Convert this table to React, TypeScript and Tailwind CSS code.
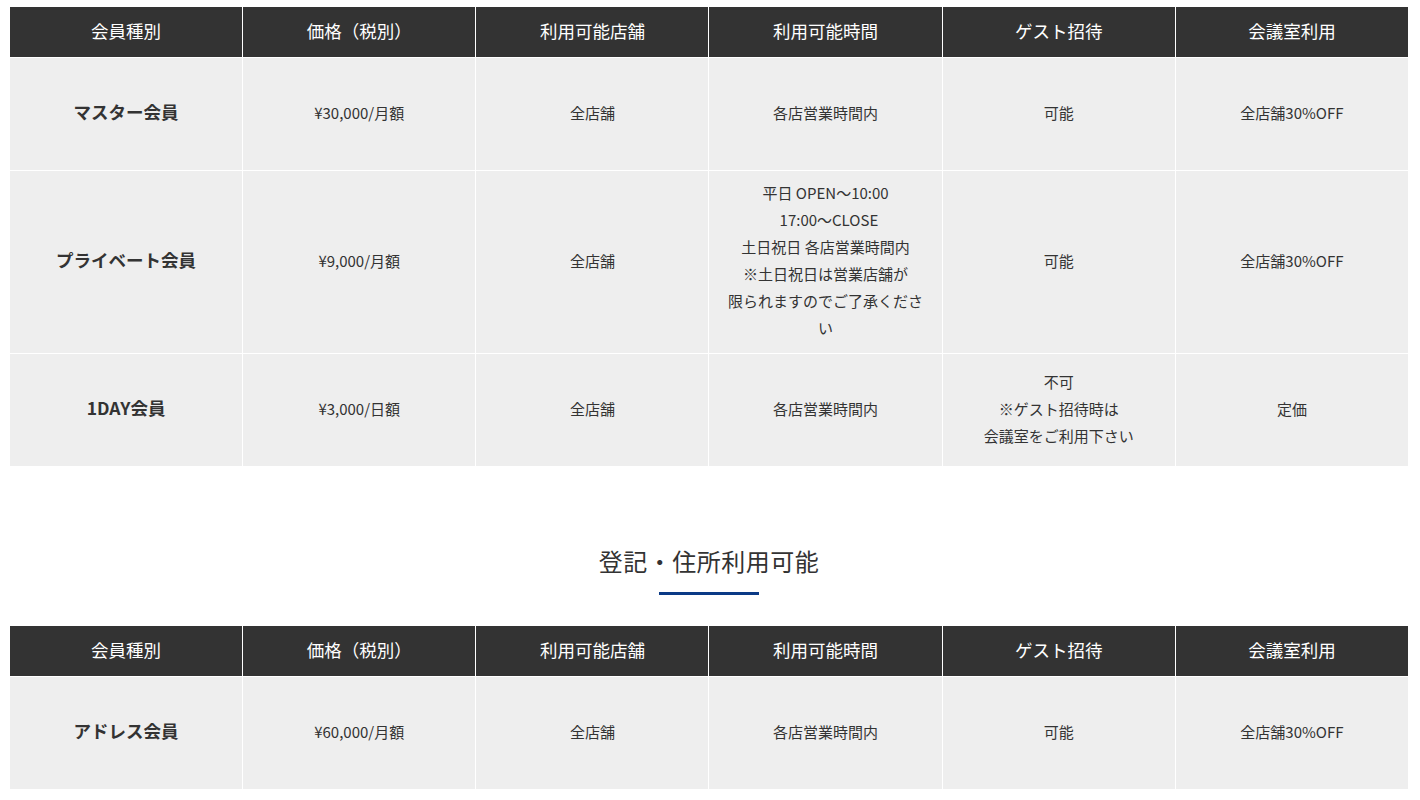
import React from 'react'

const headers = ['会員種別', '価格（税別）', '利用可能店舗', '利用可能時間', 'ゲスト招待', '会議室利用']

type Row = { name: string; cells: string[][] }

const plans: Row[] = [
    {
        name: 'マスター会員',
        cells: [['¥30,000/月額'], ['全店舗'], ['各店営業時間内'], ['可能'], ['全店舗30%OFF']],
    },
    {
        name: 'プライベート会員',
        cells: [
            ['¥9,000/月額'],
            ['全店舗'],
            ['平日 OPEN～10:00', '\u00a0\u00a017:00～CLOSE', '土日祝日 各店営業時間内', '※土日祝日は営業店舗が', '限られますのでご了承くださ', 'い'],
            ['可能'],
            ['全店舗30%OFF'],
        ],
    },
    {
        name: '1DAY会員',
        cells: [['¥3,000/日額'], ['全店舗'], ['各店営業時間内'], ['不可', '※ゲスト招待時は', '会議室をご利用下さい'], ['定価']],
    },
]

const addressPlans: Row[] = [
    {
        name: 'アドレス会員',
        cells: [['¥60,000/月額'], ['全店舗'], ['各店営業時間内'], ['可能'], ['全店舗30%OFF']],
    },
]

function PlanTable({ rows }: { rows: Row[] }) {
    return (
        <table className="w-full table-fixed border-collapse">
            <thead>
                <tr>
                    {headers.map((h) => (
                        <th
                            key={h}
                            className="h-[51px] border border-white bg-[#333333] px-2 pb-[3px] text-[17.5px] font-normal leading-[27px] text-white"
                        >
                            {h}
                        </th>
                    ))}
                </tr>
            </thead>
            <tbody>
                {rows.map((row) => (
                    <tr key={row.name} className="h-[113px]">
                        <td className="border border-white bg-[#eeeeee] px-2 pt-[8px] pb-[12px] text-center text-[17.5px] font-bold text-[#333333]">
                            {row.name}
                        </td>
                        {row.cells.map((lines, i) => (
                            <td
                                key={i}
                                className="border border-white bg-[#eeeeee] px-2 pt-[8px] pb-[12px] text-center text-[15px] leading-[27px] text-[#333333]"
                            >
                                {lines.map((l, j) => (
                                    <div key={j} className="whitespace-nowrap">{l}</div>
                                ))}
                            </td>
                        ))}
                    </tr>
                ))}
            </tbody>
        </table>
    )
}

export default function App() {
    return (
        <div
            className="min-h-[800px] bg-white px-[9px] pt-[6px]"
            style={{ fontFamily: '"Noto Sans CJK JP", "Noto Sans", sans-serif' }}
        >
            <div className="w-[1400px]">
                <PlanTable rows={plans} />

                <div className="mt-[78px] flex flex-col items-center">
                    <h2
                        className="text-[24px] font-normal leading-[36px] tracking-[0.5px] text-[#333333]"
                        style={{ fontFamily: '"Liberation Serif", "Noto Sans CJK JP", serif' }}
                    >
                        登記・住所利用可能
                    </h2>
                    <div className="mt-[11px] h-[3px] w-[100px] bg-[#0b3a86]" />
                </div>

                <div className="mt-[30px]">
                    <PlanTable rows={addressPlans} />
                </div>
            </div>
        </div>
    )
}
